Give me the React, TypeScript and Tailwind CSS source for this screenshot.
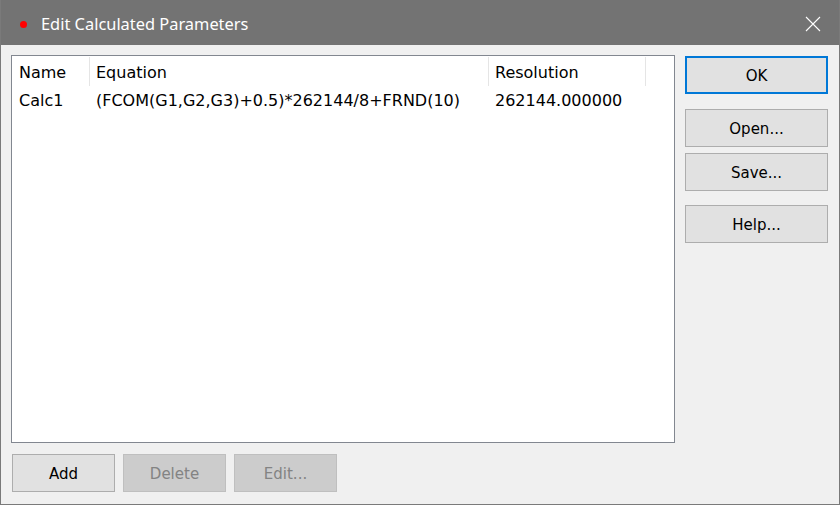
import React from 'react';

const uiFont = { fontFamily: '"DejaVu Sans", "Noto Sans", sans-serif' };

function Btn({ children, primary, disabled, className = '' }: { children: React.ReactNode; primary?: boolean; disabled?: boolean; className?: string }) {
  const look = primary
    ? 'border-2 border-[#0078d7] bg-[#e1e1e1] text-black'
    : disabled
    ? 'border border-[#bfbfbf] bg-[#cccccc] text-[#838383]'
    : 'border border-[#adadad] bg-[#e1e1e1] text-black';
  return (
    <div className={`flex items-center justify-center h-[38px] pt-[2px] text-[15px] ${look} ${className}`}>
      {children}
    </div>
  );
}

const columns = [
  { label: 'Name', w: 'w-[78px]' },
  { label: 'Equation', w: 'w-[399px]' },
  { label: 'Resolution', w: 'w-[157px]' },
];

export default function App() {
  return (
    <div className="w-[840px] h-[505px] flex flex-col bg-[#f0f0f0] border-x border-b border-[#7a7a7a] overflow-hidden" style={uiFont}>
      <div className="h-[45px] shrink-0 bg-[#737373] flex items-center pt-[3px] text-white font-['Noto_Sans',sans-serif]">
        <div className="w-[7px] h-[7px] rounded-full bg-[#ff0000] ml-[19px]" />
        <div className="ml-[14px] text-[16.4px] leading-none">Edit Calculated Parameters</div>
        <svg className="ml-auto mr-[18px]" width="16" height="16" viewBox="0 0 16 16">
          <path d="M1 1 L15 15 M15 1 L1 15" stroke="#ffffff" strokeWidth="1.1" />
        </svg>
      </div>

      <div className="flex-1 flex pl-[10px] pt-[10px]">
        <div className="flex flex-col">
          <div className="w-[664px] h-[388px] bg-white border border-[#828790] pt-[1px]">
            <div className="flex h-[29px] items-stretch">
              {columns.map((c, i) => (
                <div key={c.label} className={`${c.w} border-r border-[#e5e5e5] flex items-center pt-[3px] ${i === 0 ? 'pl-[7px]' : 'pl-[6px]'} text-[16px] text-black`}>
                  {c.label}
                </div>
              ))}
            </div>
            <div className="flex h-[28px] items-center pt-[2px] text-[16px] text-black">
              <div className="w-[78px] pl-[7px]">Calc1</div>
              <div className="w-[399px] pl-[6px]">(FCOM(G1,G2,G3)+0.5)*262144/8+FRND(10)</div>
              <div className="w-[157px] pl-[6px]">262144.000000</div>
            </div>
          </div>
          <div className="flex gap-[8px] mt-[11px] pl-[1px]">
            <Btn className="w-[103px]">Add</Btn>
            <Btn className="w-[103px]" disabled>Delete</Btn>
            <Btn className="w-[103px]" disabled>Edit...</Btn>
          </div>
        </div>

        <div className="flex flex-col ml-[10px] pt-[1px] w-[143px]">
          <Btn primary>OK</Btn>
          <Btn className="mt-[15px]">Open...</Btn>
          <Btn className="mt-[6px]">Save...</Btn>
          <Btn className="mt-[14px]">Help...</Btn>
        </div>
      </div>
    </div>
  );
}
